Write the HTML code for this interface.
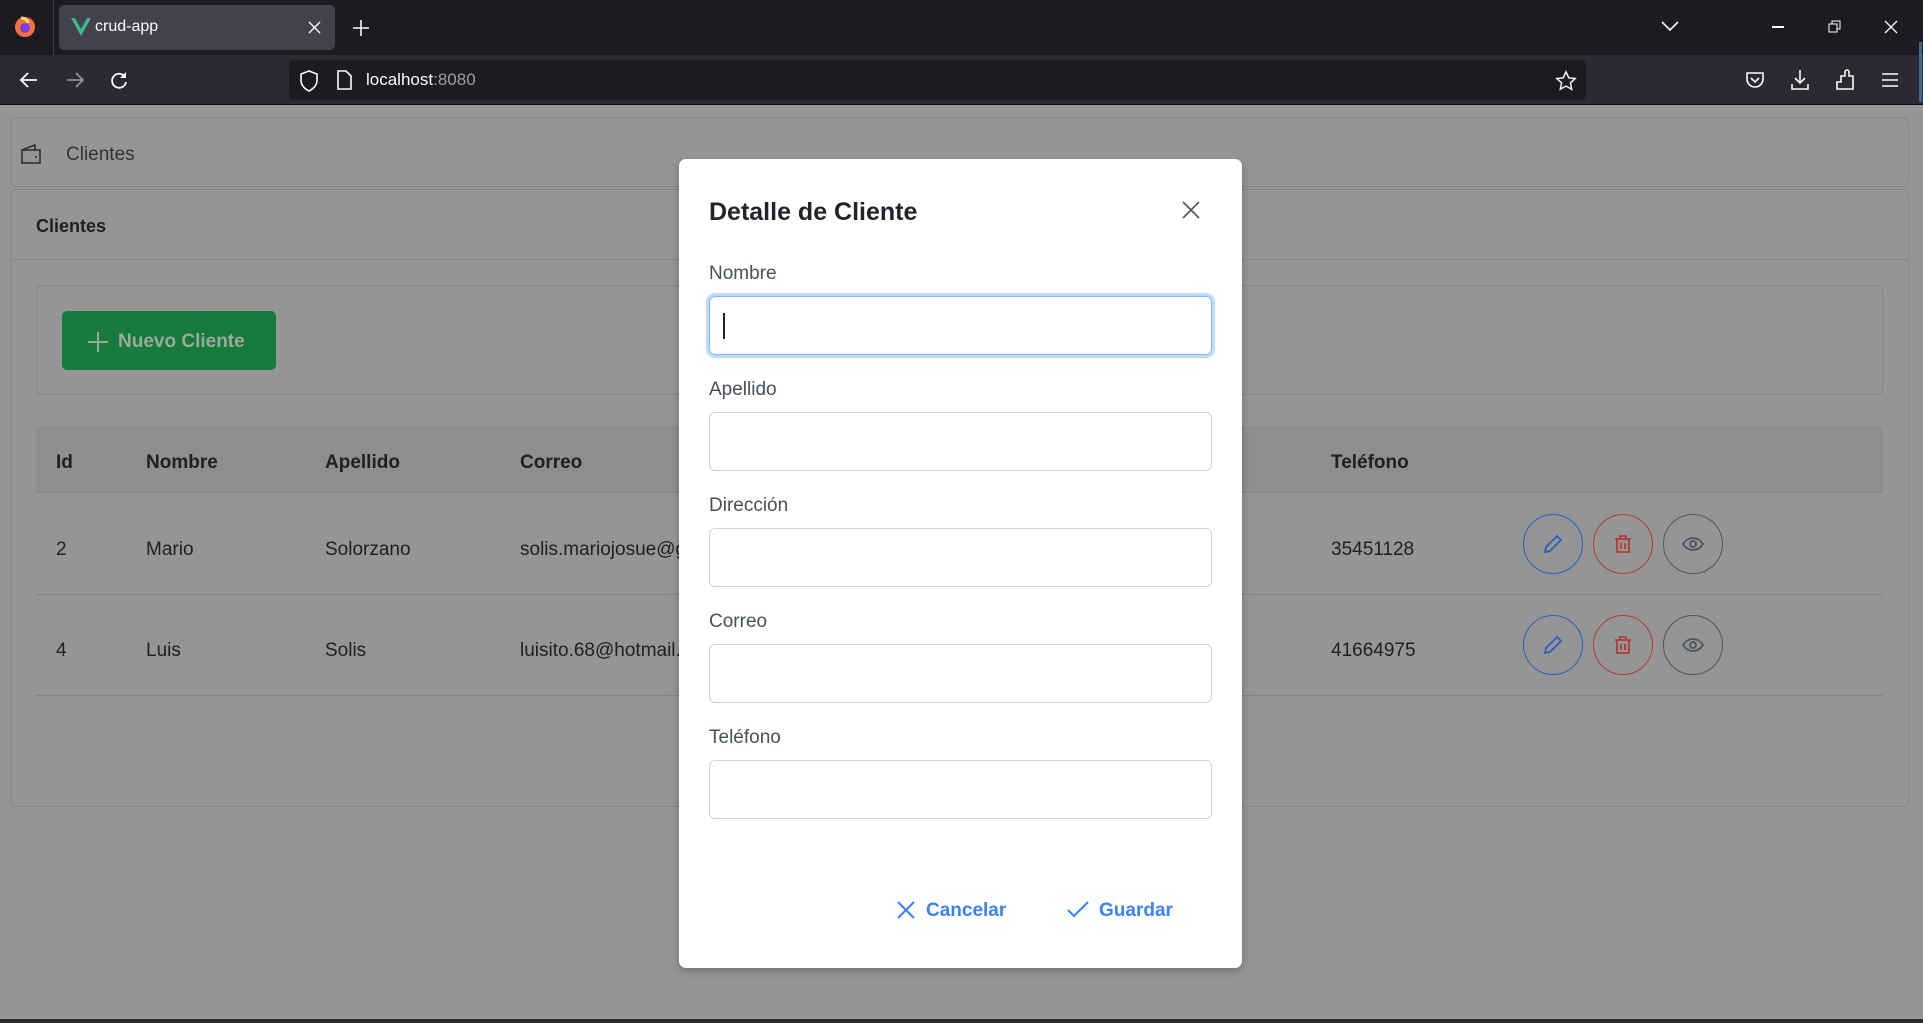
<!DOCTYPE html>
<html><head><meta charset="utf-8"><style>
*{box-sizing:border-box;margin:0;padding:0}
body{width:1923px;height:1023px;overflow:hidden;background:#959595;font-family:"Liberation Sans",sans-serif;position:relative}
.abs{position:absolute}
.tabbar{left:0;top:0;width:1923px;height:55px;background:#1c1b22}
.toolbar{left:0;top:55px;width:1923px;height:50px;background:#2b2a33;border-bottom:1px solid #0c0c0d}
.tab{left:59px;top:5px;width:276px;height:45px;background:#42414d;border-radius:5px}
.url{left:289px;top:60px;width:1297px;height:40px;background:#1c1b22;border-radius:5px}
.w{color:#fbfbfe}
.card{border:1px solid #878787;border-radius:6px}
.txt{color:#202020;font-size:19px}
.b{font-weight:bold}
.circ{width:60px;height:60px;border-radius:50%;border:1.5px solid;display:flex;align-items:center;justify-content:center}
.modal{left:679px;top:159px;width:563px;height:809px;background:#fff;border-radius:7px;box-shadow:0 3px 8px rgba(0,0,0,.25)}
.lbl{color:#495057;font-size:19px;left:30px}
.inp{left:30px;width:503px;height:59px;border:1px solid #ced4da;border-radius:6px}
.btn{color:#3b82f6;font-weight:bold;font-size:19px}
</style></head><body>
<div class="abs tabbar"></div>
<svg class="abs" style="left:13px;top:14px" width="24" height="24" viewBox="0 0 24 24"><circle cx="12" cy="13" r="10" fill="#ff7139"/><circle cx="12" cy="14" r="5" fill="#7542e5"/><path d="M8 4c3 0 6 1 7 5" stroke="#ffd567" stroke-width="3" fill="none"/></svg>
<div class="abs" style="left:53px;top:0;width:1px;height:55px;background:#3a3944"></div>
<div class="abs tab"></div>
<svg class="abs" style="left:71px;top:18px" width="20" height="18" viewBox="0 0 20 18"><path d="M0 0h4l6 11 6-11h4L10 18z" fill="#41b883"/><path d="M4 0h3l3 6 3-6h3L10 11z" fill="#35495e"/></svg>
<div class="abs w" style="left:95px;top:18px;font-size:16px">crud-app</div>
<svg class="abs" style="left:308px;top:21px" width="13" height="13"><path d="M1 1l11 11M12 1L1 12" stroke="#fbfbfe" stroke-width="1.4"/></svg>
<svg class="abs" style="left:353px;top:20px" width="16" height="16"><path d="M8 0v16M0 8h16" stroke="#fbfbfe" stroke-width="1.6"/></svg>
<svg class="abs" style="left:1660px;top:18px" width="20" height="16"><path d="M2 4l8 8 8-8" stroke="#fbfbfe" stroke-width="1.6" fill="none"/></svg>
<div class="abs" style="left:1772px;top:26px;width:12px;height:1.5px;background:#fbfbfe"></div>
<svg class="abs" style="left:1828px;top:20px" width="14" height="14"><rect x="1" y="4" width="8" height="8" stroke="#fbfbfe" fill="none"/><path d="M4 4V1h8v8H9" stroke="#fbfbfe" fill="none"/></svg>
<svg class="abs" style="left:1884px;top:20px" width="14" height="14"><path d="M1 1l12 12M13 1L1 13" stroke="#fbfbfe" stroke-width="1.3"/></svg>
<div class="abs toolbar"></div>
<svg class="abs" style="left:19px;top:70px" width="20" height="20"><path d="M18 10H3M9 3l-7 7 7 7" stroke="#fbfbfe" stroke-width="1.8" fill="none"/></svg>
<svg class="abs" style="left:65px;top:70px" width="20" height="20"><path d="M2 10h15M11 3l7 7-7 7" stroke="#8f8f9d" stroke-width="1.8" fill="none"/></svg>
<svg class="abs" style="left:109px;top:70px" width="20" height="20" viewBox="0 0 20 20"><path d="M16 7A7 7 0 1 0 17 12" stroke="#fbfbfe" stroke-width="1.8" fill="none"/><path d="M17 2v6h-6" fill="#fbfbfe"/></svg>
<div class="abs url"></div>
<svg class="abs" style="left:299px;top:70px" width="20" height="22"><path d="M10 1l8 3v6c0 6-4 9-8 11-4-2-8-5-8-11V4z" stroke="#fbfbfe" stroke-width="1.6" fill="none"/></svg>
<svg class="abs" style="left:336px;top:70px" width="16" height="20"><path d="M2 1h8l5 5v13H2z" stroke="#fbfbfe" stroke-width="1.6" fill="none"/></svg>
<div class="abs w" style="left:366px;top:70px;font-size:17px">localhost<span style="color:#9e9ea6">:8080</span></div>
<svg class="abs" style="left:1555px;top:70px" width="22" height="22" viewBox="0 0 24 24"><path d="M12 2l3 6.5 7 .8-5.2 4.8 1.4 7L12 17.5 5.8 21l1.4-7L2 9.3l7-.8z" stroke="#fbfbfe" stroke-width="1.6" fill="none"/></svg>
<svg class="abs" style="left:1745px;top:70px" width="20" height="20"><path d="M2 3h16v6a8 8 0 0 1-16 0z" stroke="#fbfbfe" stroke-width="1.6" fill="none"/><path d="M6 8l4 4 4-4" stroke="#fbfbfe" stroke-width="1.6" fill="none"/></svg>
<svg class="abs" style="left:1790px;top:69px" width="20" height="22"><path d="M10 1v13M5 9l5 5 5-5M2 15v5h16v-5" stroke="#fbfbfe" stroke-width="1.6" fill="none"/></svg>
<svg class="abs" style="left:1835px;top:69px" width="20" height="22"><path d="M2 13h4V7h4V3a2 2 0 0 1 4 0v4h4v13H2z" stroke="#fbfbfe" stroke-width="1.6" fill="none"/></svg>
<svg class="abs" style="left:1882px;top:72px" width="16" height="16"><path d="M0 2h16M0 8h16M0 14h16" stroke="#fbfbfe" stroke-width="1.6"/></svg>
<div class="abs" style="left:1919px;top:42px;width:3px;height:60px;background:#3a6a9a"></div>

<div class="abs card" style="left:10px;top:117px;width:1899px;height:70px"></div>
<svg class="abs" style="left:21px;top:143px" width="22" height="22"><path d="M1 7h18v13H1zM1 7l13-5v5" stroke="#2a2a2a" stroke-width="1.5" fill="none"/><circle cx="15" cy="14" r="1" fill="#2a2a2a"/></svg>
<div class="abs txt" style="left:66px;top:144px;color:#333">Clientes</div>
<div class="abs card" style="left:10px;top:189px;width:1899px;height:618px"></div>
<div class="abs" style="left:11px;top:259px;width:1897px;height:1px;background:#878787"></div>
<div class="abs txt b" style="left:36px;top:216px;font-size:18px">Clientes</div>
<div class="abs card" style="left:36px;top:285px;width:1847px;height:110px"></div>
<div class="abs" style="left:62px;top:311px;width:214px;height:59px;background:#157a3c;border-radius:5px"></div>
<svg class="abs" style="left:88px;top:332px" width="20" height="20"><path d="M10 0v20M0 10h20" stroke="#9aa89d" stroke-width="2"/></svg>
<div class="abs b" style="left:118px;top:331px;font-size:19px;color:#9aa89d">Nuevo Cliente</div>

<div class="abs" style="left:36px;top:426px;width:1847px;height:67px;background:#8e8e8e;border-bottom:1px solid #848484"></div>
<div class="abs txt b" style="left:56px;top:452px">Id</div>
<div class="abs txt b" style="left:146px;top:452px">Nombre</div>
<div class="abs txt b" style="left:325px;top:452px">Apellido</div>
<div class="abs txt b" style="left:520px;top:452px">Correo</div>
<div class="abs txt b" style="left:1331px;top:452px">Teléfono</div>
<div class="abs" style="left:36px;top:594px;width:1847px;height:1px;background:#848484"></div>
<div class="abs" style="left:36px;top:695px;width:1847px;height:1px;background:#848484"></div>
<div class="abs txt" style="left:56px;top:539px">2</div>
<div class="abs txt" style="left:146px;top:539px">Mario</div>
<div class="abs txt" style="left:325px;top:539px">Solorzano</div>
<div class="abs txt" style="left:520px;top:539px">solis.mariojosue@gmail.com</div>
<div class="abs txt" style="left:1331px;top:539px">35451128</div>
<div class="abs txt" style="left:56px;top:640px">4</div>
<div class="abs txt" style="left:146px;top:640px">Luis</div>
<div class="abs txt" style="left:325px;top:640px">Solis</div>
<div class="abs txt" style="left:520px;top:640px">luisito.68@hotmail.com</div>
<div class="abs txt" style="left:1331px;top:640px">41664975</div>

<div class="abs" style="left:1523px;top:514px;display:flex;gap:10px">
<div class="circ" style="border-color:#2e5fb8"><svg width="24" height="24"><path d="M4 20l1-5L16 4l4 4L9 19z" stroke="#2e5fb8" stroke-width="1.8" fill="none"/></svg></div>
<div class="circ" style="border-color:#b33a3a"><svg width="24" height="24"><path d="M4 7h16M9 7V4h6v3M6 7v13h12V7M10 11v6M14 11v6" stroke="#b33a3a" stroke-width="1.8" fill="none"/></svg></div>
<div class="circ" style="border-color:#4d5563"><svg width="24" height="24"><path d="M2 12c5-8 15-8 20 0-5 8-15 8-20 0z" stroke="#4d5563" stroke-width="1.8" fill="none"/><circle cx="12" cy="12" r="3" stroke="#4d5563" stroke-width="1.8" fill="none"/></svg></div>
</div>
<div class="abs" style="left:1523px;top:615px;display:flex;gap:10px">
<div class="circ" style="border-color:#2e5fb8"><svg width="24" height="24"><path d="M4 20l1-5L16 4l4 4L9 19z" stroke="#2e5fb8" stroke-width="1.8" fill="none"/></svg></div>
<div class="circ" style="border-color:#b33a3a"><svg width="24" height="24"><path d="M4 7h16M9 7V4h6v3M6 7v13h12V7M10 11v6M14 11v6" stroke="#b33a3a" stroke-width="1.8" fill="none"/></svg></div>
<div class="circ" style="border-color:#4d5563"><svg width="24" height="24"><path d="M2 12c5-8 15-8 20 0-5 8-15 8-20 0z" stroke="#4d5563" stroke-width="1.8" fill="none"/><circle cx="12" cy="12" r="3" stroke="#4d5563" stroke-width="1.8" fill="none"/></svg></div>
</div>
<div class="abs" style="left:0;top:1019px;width:1923px;height:4px;background:#2b2a33"></div>

<div class="abs modal">
<div class="abs b" style="left:30px;top:39px;font-size:25px;color:#212529">Detalle de Cliente</div>
<svg class="abs" style="left:503px;top:42px" width="18" height="18"><path d="M1 1l16 16M17 1L1 17" stroke="#555" stroke-width="1.6"/></svg>
<div class="abs lbl" style="top:104px">Nombre</div>
<div class="abs inp" style="top:137px;border-color:#86b7fe;box-shadow:0 0 0 3px #c2dbfe"></div>
<div class="abs" style="left:44px;top:154px;width:1.5px;height:26px;background:#222"></div>
<div class="abs lbl" style="top:220px">Apellido</div>
<div class="abs inp" style="top:253px"></div>
<div class="abs lbl" style="top:336px">Dirección</div>
<div class="abs inp" style="top:369px"></div>
<div class="abs lbl" style="top:452px">Correo</div>
<div class="abs inp" style="top:485px"></div>
<div class="abs lbl" style="top:568px">Teléfono</div>
<div class="abs inp" style="top:601px"></div>
<svg class="abs" style="left:218px;top:742px" width="18" height="18"><path d="M1 1l16 16M17 1L1 17" stroke="#3b82f6" stroke-width="2"/></svg>
<div class="abs btn" style="left:247px;top:741px">Cancelar</div>
<svg class="abs" style="left:388px;top:742px" width="22" height="18"><path d="M1 9l6 6L21 1" stroke="#3b82f6" stroke-width="2" fill="none"/></svg>
<div class="abs btn" style="left:420px;top:741px">Guardar</div>
</div>
</body></html>
